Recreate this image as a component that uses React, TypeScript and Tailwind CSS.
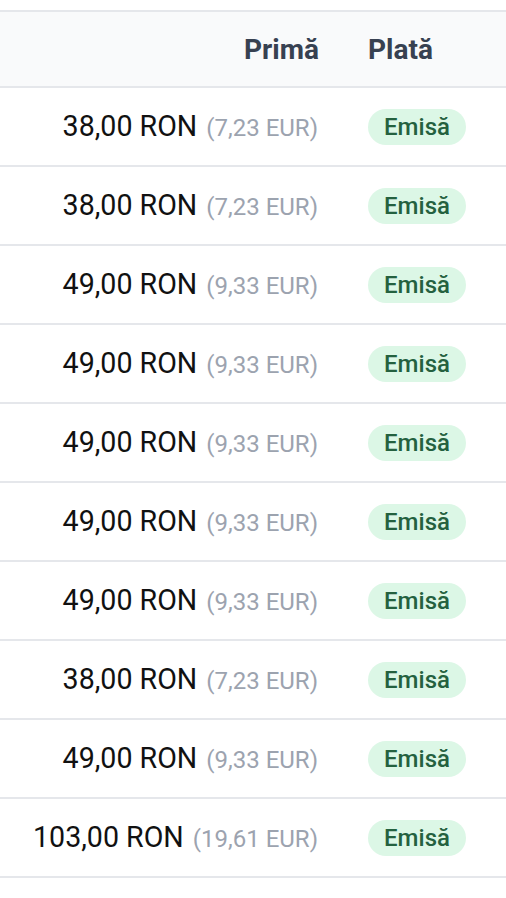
const rows = [
  ["38,00", "7,23"],
  ["38,00", "7,23"],
  ["49,00", "9,33"],
  ["49,00", "9,33"],
  ["49,00", "9,33"],
  ["49,00", "9,33"],
  ["49,00", "9,33"],
  ["38,00", "7,23"],
  ["49,00", "9,33"],
  ["103,00", "19,61"],
];

export default function App() {
  return (
    <div className="w-[506px] h-[898px] overflow-hidden bg-white pt-[10px]" style={{ fontFamily: "Roboto, 'Noto Sans', sans-serif" }}>
      <div className="border-t-2 border-[#e5e7eb]">
        <div className="flex h-[76px] items-center bg-[#f9fafb] border-b-2 border-[#e5e7eb] pt-[2px]">
          <div className="w-[343px] shrink-0 flex justify-end pr-6 text-[28px] font-bold text-[#374151]">Primă</div>
          <div className="pl-[25px] text-[28px] font-bold text-[#374151]">Plată</div>
        </div>
        {rows.map(([ron, eur], i) => (
          <div key={i} className="flex h-[79px] items-center border-b-2 border-[#e5e7eb]">
            <div className="w-[342px] shrink-0 flex justify-end items-baseline pr-6 whitespace-nowrap">
              <span className="text-[28.6px] text-[#111111]">{ron} RON</span>
              <span className="ml-[9px] text-[24px] text-[#9ca3af]">({eur} EUR)</span>
            </div>
            <div className="pl-[26px]">
              <span className="inline-flex h-[36px] w-[98px] items-center justify-center rounded-full bg-[#dcf7e6] text-[24px] font-medium text-[#24613f]">Emisă</span>
            </div>
          </div>
        ))}
      </div>
    </div>
  );
}
